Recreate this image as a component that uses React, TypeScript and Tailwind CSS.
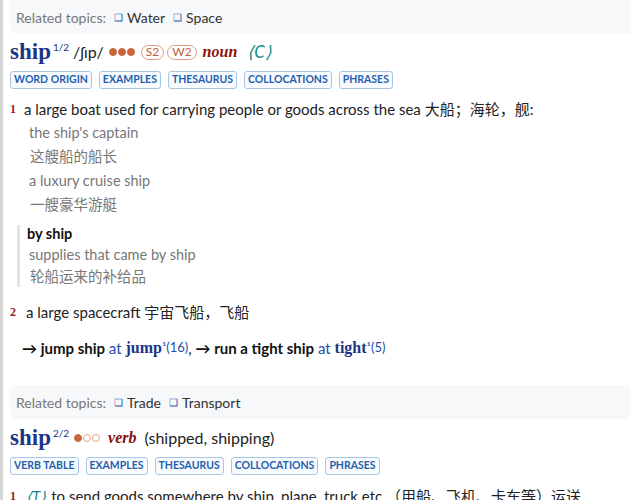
import React from "react"

const sans = { fontFamily: '"Lato", "Noto Sans CJK SC", sans-serif' }
const serif = { fontFamily: '"Liberation Serif", "DejaVu Serif", serif' }

function Topics({ items, rounded }: { items: string[]; rounded: string }) {
  return (
    <div className={`flex h-[34px] items-center bg-[#f7f8fa] pl-[6px] text-[14px] ${rounded}`}>
      <span className="text-[#777]">Related topics:</span>
      {items.map((t) => (
        <span key={t} className="ml-[8px] flex items-center text-[#333]">
          <span className="mr-[4px] text-[10px] text-[#1f5fae]">❑</span>
          {t}
        </span>
      ))}
    </div>
  )
}

function Buttons({ labels }: { labels: string[] }) {
  return (
    <div className="mt-[1px] flex h-[18px] gap-[7px]">
      {labels.map((l) => (
        <span
          key={l}
          className="flex items-center rounded-[3px] border border-[#a9c6e6] bg-[#f8fbfe] px-[3px] text-[10.5px] font-bold text-[#1f5fae]"
        >
          {l}
        </span>
      ))}
    </div>
  )
}

function Dot({ filled }: { filled: boolean }) {
  return (
    <span
      className={`inline-block h-[8px] w-[8px] rounded-full border ${filled ? "border-[#c8653c] bg-[#c8653c]" : "border-[#e0a58a] bg-white"}`}
    />
  )
}

function Badge({ children }: { children: React.ReactNode }) {
  return (
    <span className="flex h-[15px] items-center rounded-full border border-[#dd9c7c] px-[4px] text-[12px] leading-none text-[#c0603a]">
      {children}
    </span>
  )
}

function SenseNum({ n }: { n: string }) {
  return (
    <span className="w-[14px] shrink-0 text-[12px] font-bold text-[#9b1c1c]" style={serif}>
      {n}
    </span>
  )
}

export default function App() {
  return (
    <div className="h-[500px] overflow-hidden border-l-[3px] border-[#d6d6d6] bg-white pl-[7px] text-[#222]" style={sans}>
      <Topics items={["Water", "Space"]} rounded="rounded-bl-lg" />

      <div className="flex h-[36px] items-center">
        <span className="text-[23px] font-bold text-[#1c3585]" style={serif}>ship</span>
        <sup className="ml-[2px] text-[10px] text-[#1c3585]">1/2</sup>
        <span className="ml-[4px] text-[16px] text-[#222]">/ʃɪp/</span>
        <span className="ml-[5px] flex gap-[1px]">
          <Dot filled />
          <Dot filled />
          <Dot filled />
        </span>
        <span className="ml-[6px] flex gap-[3px]">
          <Badge>S2</Badge>
          <Badge>W2</Badge>
        </span>
        <span className="ml-[6px] text-[16px] font-bold italic text-[#8b1010]" style={serif}>noun</span>
        <span className="ml-[10px] text-[17px] italic text-[#138a8a]">⟨C⟩</span>
      </div>

      <Buttons labels={["WORD ORIGIN", "EXAMPLES", "THESAURUS", "COLLOCATIONS", "PHRASES"]} />

      <div className="mt-[8px] flex h-[24px] items-center text-[15px]">
        <SenseNum n="1" />
        <span>a large boat used for carrying people or goods across the sea 大船；海轮，舰:</span>
      </div>
      <div className="pl-[19px] text-[14.5px] leading-[24px] text-[#777]">
        <div>the ship's captain</div>
        <div className="pl-[1px]">这艘船的船长</div>
        <div>a luxury cruise ship</div>
        <div className="pl-[1px]">一艘豪华游艇</div>
      </div>

      <div className="ml-[7px] mt-[8px] h-[62px] border-l-[3px] border-[#e2e2e6] pl-[7px] text-[14.5px]">
        <div className="h-[18px] leading-[18px] font-bold text-[#111]">by ship</div>
        <div className="h-[24px] pl-[2px] leading-[24px] text-[#777]">supplies that came by ship</div>
        <div className="h-[20px] pl-[3px] leading-[20px] text-[#777]">轮船运来的补给品</div>
      </div>

      <div className="mt-[13px] flex h-[24px] items-center text-[15px]">
        <SenseNum n="2" />
        <span className="ml-[2px]">a large spacecraft 宇宙飞船，飞船</span>
      </div>

      <div className="ml-[12px] mt-[12px] flex h-[24px] items-center whitespace-pre text-[15px]">
        <span className="font-bold text-[#111]">→ jump ship</span>
        <span className="text-[#1f4fa8]"> at </span>
        <span className="text-[16px] font-bold text-[#1c3585]" style={serif}>jump</span>
        <span className="text-[13px] text-[#1f4fa8]">¹(16)</span>
        <span className="text-[#111]">, </span>
        <span className="font-bold text-[#111]">→ run a tight ship</span>
        <span className="text-[#1f4fa8]"> at </span>
        <span className="text-[16px] font-bold text-[#1c3585]" style={serif}>tight</span>
        <span className="text-[13px] text-[#1f4fa8]">¹(5)</span>
      </div>

      <div className="mt-[25px]">
        <Topics items={["Trade", "Transport"]} rounded="rounded-l-lg" />
      </div>

      <div className="mt-[1px] flex h-[36px] items-center">
        <span className="text-[23px] font-bold text-[#1c3585]" style={serif}>ship</span>
        <sup className="ml-[2px] text-[10px] text-[#1c3585]">2/2</sup>
        <span className="ml-[5px] flex gap-[1px]">
          <Dot filled />
          <Dot filled={false} />
          <Dot filled={false} />
        </span>
        <span className="ml-[8px] text-[16px] font-bold italic text-[#8b1010]" style={serif}>verb</span>
        <span className="ml-[8px] text-[16px] text-[#222]">(shipped, shipping)</span>
      </div>

      <Buttons labels={["VERB TABLE", "EXAMPLES", "THESAURUS", "COLLOCATIONS", "PHRASES"]} />

      <div className="mt-[9px] flex h-[24px] items-center whitespace-nowrap text-[15px]">
        <SenseNum n="1" />
        <span className="ml-[2px] italic text-[#138a8a]">⟨T⟩</span>
        <span className="ml-[5px]">to send goods somewhere by ship, plane, truck etc （用船、飞机、卡车等）运送</span>
      </div>
    </div>
  )
}
